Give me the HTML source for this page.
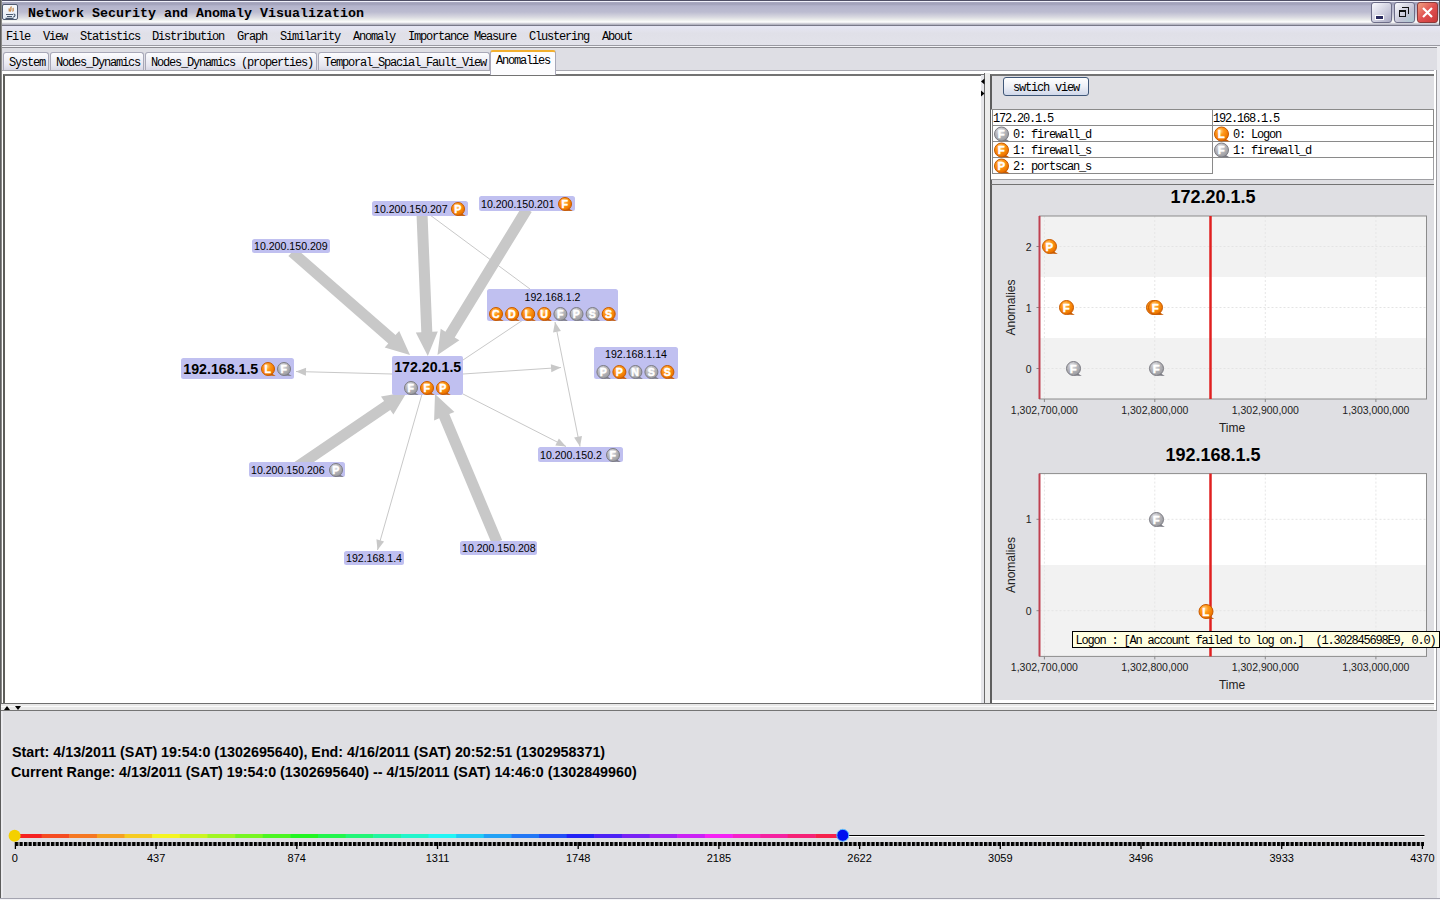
<!DOCTYPE html><html><head><meta charset="utf-8"><style>
*{margin:0;padding:0;box-sizing:border-box}
html,body{width:1440px;height:900px;overflow:hidden;background:#dfdfe3;font-family:"Liberation Sans",sans-serif}
.a{position:absolute}
#title{left:0;top:0;width:1440px;height:26px;background:linear-gradient(#f0f0fa 0px,#f0f0fa 0.8px,#a8a8c0 1.5px,#a0a0b8 3px,#b4b4cc 5px,#bcbcd0 11px,#d8d8e0 16px,#eceeec 19px,#fafafa 20.5px,#ffffff 21px,#d0d0d8 22.5px,#a8a8b8 24px);border-top:1px solid #505066;border-bottom:1px solid #787888}
#ttext{left:28px;top:5px;font:bold 13.33px "Liberation Mono",monospace;color:#000;white-space:pre}
#menu{left:0;top:26px;width:1440px;height:20px;background:linear-gradient(#e6e6f4,#e0e0e8 40%,#e2e2ea);border-bottom:1px solid #9a9aa2}
.mi{top:4px;font:12px "Liberation Mono",monospace;letter-spacing:-1.2px;color:#000;white-space:pre}
#tabstrip{left:0;top:46px;width:1440px;height:28px;background:#dedee4;border-top:1px solid #f4f4f8}
.tab{top:5px;height:19px;border:1px solid #a8a8b8;border-bottom:none;border-radius:3px 3px 0 0;background:linear-gradient(#fcfcfe,#e6e6f0 70%,#d4d4e2);font:12px "Liberation Mono",monospace;letter-spacing:-1.2px;padding-left:5px;line-height:21px;white-space:pre}
.tab.sel{z-index:5;top:3px;height:25px;background:#fcfcfe;border-top:2px solid #f2b030;line-height:18px}
.m12{font:12px "Liberation Mono",monospace;letter-spacing:-1.2px;white-space:pre;color:#000}
svg text{font-family:"Liberation Sans",sans-serif}
</style></head><body>
<div id="title" class="a">
 <div class="a" style="left:2px;top:3px;width:16px;height:16px;border:1px solid #505a70;border-radius:2px;background:linear-gradient(#f8f8fc,#e4ecf6)"></div>
 <svg class="a" style="left:3px;top:4px" width="14" height="14" viewBox="0 0 14 14"><path d="M8.5 1.5c-2 1.5 1 2.5-1.5 5M10.5 3c-1.5 1 1 2-1 3.5M6.5 3.5c-1 1 .5 1.5-.5 3" stroke="#c8884a" fill="none" stroke-width="1.3"/><path d="M3 9.5h7M4 11.5h5M2.5 13.3h8" stroke="#4a5a70" stroke-width="1.2"/><path d="M10.5 9c2 0 2 3-.5 3" stroke="#4a5a70" fill="none" stroke-width="1.2"/></svg>
 <div id="ttext" class="a">Network Security and Anomaly Visualization</div>
 <div class="a" style="left:1371px;top:1px;width:21px;height:21px;border:1px solid #6d6d88;border-radius:3px;background:linear-gradient(135deg,#fafafe,#c4c4d6 70%,#a6a6c0)"></div>
 <div class="a" style="left:1376px;top:15px;width:7px;height:3px;background:#2c2c60;box-shadow:0 0 0 1px #fff"></div>
 <div class="a" style="left:1394px;top:1px;width:21px;height:21px;border:1px solid #6d6d88;border-radius:3px;background:linear-gradient(135deg,#fafafe,#c4c4d6 60%,#a8c8d0)"></div>
 <div class="a" style="left:1402px;top:6px;width:7px;height:7px;border:1.5px solid #111;border-left:none;border-bottom:none"></div>
 <div class="a" style="left:1399px;top:9px;width:7px;height:7px;border:1.5px solid #111;border-top-width:2px"></div>
 <div class="a" style="left:1417px;top:1px;width:21px;height:21px;border:1px solid #8a3a3a;border-radius:3px;background:linear-gradient(135deg,#f0a080,#e05050 50%,#c83838)"></div>
 <svg class="a" style="left:1420px;top:4px" width="15" height="15"><path d="M3 3L12 12M12 3L3 12" stroke="#fff" stroke-width="2.2"/></svg>
</div>
<div id="menu" class="a">
<div class="a mi" style="left:6px">File</div>
<div class="a mi" style="left:43px">View</div>
<div class="a mi" style="left:80px">Statistics</div>
<div class="a mi" style="left:152px">Distribution</div>
<div class="a mi" style="left:237px">Graph</div>
<div class="a mi" style="left:280px">Similarity</div>
<div class="a mi" style="left:353px">Anomaly</div>
<div class="a mi" style="left:408px">Importance Measure</div>
<div class="a mi" style="left:529px">Clustering</div>
<div class="a mi" style="left:602px">About</div>
</div>
<div id="tabstrip" class="a"><div class="a" style="left:0;top:0px;width:1440px;height:1px;background:#8a8a90"></div>
<div class="a tab" style="left:3px;width:46px">System</div>
<div class="a tab" style="left:50px;width:94px">Nodes_Dynamics</div>
<div class="a tab" style="left:145px;width:172px">Nodes_Dynamics (properties)</div>
<div class="a tab" style="left:318px;width:172px">Temporal_Spacial_Fault_View</div>
<div class="a tab sel" style="left:490px;width:66px">Anomalies</div>
</div>
<div class="a" style="left:2px;top:70px;width:1435px;height:1px;background:#a8a8b0"></div>
<div class="a" style="left:2px;top:71px;width:1434px;height:3px;background:#fff"></div>
<div class="a" style="left:3px;top:74px;width:982px;height:630px;background:#fff;border-top:2px solid #737373;border-left:2px solid #5e5e5a;border-bottom:1px solid #737373"></div>
<div class="a" style="left:981px;top:75px;width:4px;height:628px;background:#e6e6ea"></div>
<div class="a" style="left:984px;top:73px;width:1px;height:631px;background:#6a6a6a"></div>
<div class="a" style="left:985px;top:73px;width:5px;height:631px;background:#ececec"></div>
<svg class="a" style="left:980px;top:78px" width="6" height="20"><path d="M4.5 0.5L1 3.5L4.5 6.5Z" fill="#000"/><path d="M1 12.5L4.5 15.5L1 18.5Z" fill="#000"/></svg>
<svg class="a" style="left:0;top:0" width="1440" height="900"><defs>
<radialGradient id="go" cx="40%" cy="30%" r="75%"><stop offset="0" stop-color="#ffd090"/><stop offset="0.35" stop-color="#ff9a1a"/><stop offset="0.8" stop-color="#f07800"/><stop offset="1" stop-color="#d06000"/></radialGradient>
<radialGradient id="gg" cx="40%" cy="30%" r="75%"><stop offset="0" stop-color="#e8e8ec"/><stop offset="0.4" stop-color="#bcbcc0"/><stop offset="0.85" stop-color="#a0a0a4"/><stop offset="1" stop-color="#88888c"/></radialGradient>
</defs><line x1="392" y1="374" x2="296" y2="371.5" stroke="#c8c8c8" stroke-width="1"/><path d="M296.0 371.5 L306.1 367.8 L305.9 375.8Z" fill="#c8c8c8"/><line x1="463" y1="374" x2="561" y2="367.5" stroke="#c8c8c8" stroke-width="1"/><path d="M561.0 367.5 L551.3 372.2 L550.8 364.2Z" fill="#c8c8c8"/><line x1="422" y1="394" x2="377.5" y2="550" stroke="#c8c8c8" stroke-width="1"/><path d="M377.5 550.0 L376.4 539.3 L384.1 541.5Z" fill="#c8c8c8"/><line x1="463" y1="394" x2="566" y2="446.5" stroke="#c8c8c8" stroke-width="1"/><path d="M566.0 446.5 L555.3 445.5 L558.9 438.4Z" fill="#c8c8c8"/><line x1="555" y1="322" x2="580" y2="446.5" stroke="#c8c8c8" stroke-width="1"/><path d="M580.0 446.5 L574.1 437.5 L582.0 435.9Z" fill="#c8c8c8"/><path d="M555.0 322.0 L560.9 331.0 L553.0 332.6Z" fill="#c8c8c8"/><line x1="430" y1="215" x2="530" y2="289" stroke="#c8c8c8" stroke-width="1"/><line x1="463" y1="360" x2="523" y2="320" stroke="#c8c8c8" stroke-width="1"/><path d="M288.4 256.1 L388.3 343.4 L384.7 347.5 L410.0 355.0 L399.2 330.9 L395.5 335.1 L295.6 247.9Z" fill="#c8c8c8"/><path d="M416.5 214.2 L421.3 332.2 L415.8 332.5 L427.8 356.0 L437.8 331.6 L432.3 331.8 L427.5 213.8Z" fill="#c8c8c8"/><path d="M522.3 206.1 L445.4 331.7 L440.7 328.8 L437.5 355.0 L459.4 340.3 L454.7 337.4 L531.7 211.9Z" fill="#c8c8c8"/><path d="M294.1 475.5 L390.3 410.1 L393.4 414.6 L407.0 392.0 L381.0 396.4 L384.1 401.0 L287.9 466.5Z" fill="#c8c8c8"/><path d="M502.1 539.9 L449.3 414.0 L454.4 411.9 L435.0 394.0 L434.1 420.4 L439.2 418.3 L491.9 544.1Z" fill="#c8c8c8"/><rect x="252" y="239" width="78" height="14" rx="2.5" fill="#c0c0f0"/><text x="254" y="250" font-size="10.6"  text-anchor="start" fill="#000">10.200.150.209</text><rect x="372" y="201" width="96" height="15" rx="2.5" fill="#c0c0f0"/><text x="374" y="213" font-size="10.6"  text-anchor="start" fill="#000">10.200.150.207</text><path d="M461.5 213.2 L465.7 216.0 L458.7 215.7Z" fill="#c85a00"/><circle cx="458.0" cy="209.0" r="6.5" fill="url(#go)" stroke="#c85a00" stroke-width="1"/><text x="457.8" y="212.9" text-anchor="middle" font-weight="bold" font-size="10.6" fill="#fff" stroke="#fff" stroke-width="0.45">P</text><rect x="479" y="196" width="96" height="15" rx="2.5" fill="#c0c0f0"/><text x="481" y="208" font-size="10.6"  text-anchor="start" fill="#000">10.200.150.201</text><path d="M568.5 208.2 L572.7 211.0 L565.7 210.7Z" fill="#c85a00"/><circle cx="565.0" cy="204.0" r="6.5" fill="url(#go)" stroke="#c85a00" stroke-width="1"/><text x="564.8" y="207.9" text-anchor="middle" font-weight="bold" font-size="10.6" fill="#fff" stroke="#fff" stroke-width="0.45">F</text><rect x="249" y="462" width="96" height="15" rx="2.5" fill="#c0c0f0"/><text x="251" y="474" font-size="10.6"  text-anchor="start" fill="#000">10.200.150.206</text><path d="M339.5 474.2 L343.7 477.0 L336.7 476.6Z" fill="#7c7c84"/><circle cx="336.0" cy="470.0" r="6.5" fill="url(#gg)" stroke="#7c7c84" stroke-width="1"/><text x="335.8" y="473.9" text-anchor="middle" font-weight="bold" font-size="10.6" fill="#fff" stroke="#fff" stroke-width="0.45">P</text><rect x="344" y="551" width="60" height="14" rx="2.5" fill="#c0c0f0"/><text x="346" y="562" font-size="10.6"  text-anchor="start" fill="#000">192.168.1.4</text><rect x="460" y="541" width="77" height="14" rx="2.5" fill="#c0c0f0"/><text x="462" y="552" font-size="10.6"  text-anchor="start" fill="#000">10.200.150.208</text><rect x="538" y="447" width="85" height="15" rx="2.5" fill="#c0c0f0"/><text x="540" y="459" font-size="10.6"  text-anchor="start" fill="#000">10.200.150.2</text><path d="M616.5 459.2 L620.7 462.0 L613.7 461.6Z" fill="#7c7c84"/><circle cx="613.0" cy="455.0" r="6.5" fill="url(#gg)" stroke="#7c7c84" stroke-width="1"/><text x="612.8" y="458.9" text-anchor="middle" font-weight="bold" font-size="10.6" fill="#fff" stroke="#fff" stroke-width="0.45">F</text><rect x="181" y="358" width="113" height="21" rx="2.5" fill="#c0c0f0"/><text x="183.3" y="374" font-size="14.2" font-weight="bold" text-anchor="start" fill="#000">192.168.1.5</text><path d="M271.5 373.2 L275.7 376.0 L268.7 375.6Z" fill="#c85a00"/><circle cx="268.0" cy="369.0" r="6.5" fill="url(#go)" stroke="#c85a00" stroke-width="1"/><text x="267.8" y="372.9" text-anchor="middle" font-weight="bold" font-size="10.6" fill="#fff" stroke="#fff" stroke-width="0.45">L</text><path d="M287.5 373.2 L291.7 376.0 L284.7 375.6Z" fill="#7c7c84"/><circle cx="284.0" cy="369.0" r="6.5" fill="url(#gg)" stroke="#7c7c84" stroke-width="1"/><text x="283.8" y="372.9" text-anchor="middle" font-weight="bold" font-size="10.6" fill="#fff" stroke="#fff" stroke-width="0.45">F</text><rect x="392" y="356" width="71" height="39" rx="2" fill="#c0c0f0"/><text x="394.2" y="371.8" font-size="14.2" font-weight="bold" text-anchor="start" fill="#000">172.20.1.5</text><path d="M414.5 392.2 L418.7 395.0 L411.7 394.6Z" fill="#7c7c84"/><circle cx="411.0" cy="388.0" r="6.5" fill="url(#gg)" stroke="#7c7c84" stroke-width="1"/><text x="410.8" y="391.9" text-anchor="middle" font-weight="bold" font-size="10.6" fill="#fff" stroke="#fff" stroke-width="0.45">F</text><path d="M430.5 392.2 L434.7 395.0 L427.7 394.6Z" fill="#c85a00"/><circle cx="427.0" cy="388.0" r="6.5" fill="url(#go)" stroke="#c85a00" stroke-width="1"/><text x="426.8" y="391.9" text-anchor="middle" font-weight="bold" font-size="10.6" fill="#fff" stroke="#fff" stroke-width="0.45">F</text><path d="M446.5 392.2 L450.7 395.0 L443.7 394.6Z" fill="#c85a00"/><circle cx="443.0" cy="388.0" r="6.5" fill="url(#go)" stroke="#c85a00" stroke-width="1"/><text x="442.8" y="391.9" text-anchor="middle" font-weight="bold" font-size="10.6" fill="#fff" stroke="#fff" stroke-width="0.45">P</text><rect x="487" y="289" width="131" height="32" rx="2.5" fill="#c0c0f0"/><text x="552.5" y="301" font-size="10.6"  text-anchor="middle" fill="#000">192.168.1.2</text><path d="M499.5 318.2 L503.7 321.0 L496.7 320.6Z" fill="#c85a00"/><circle cx="496.0" cy="314.0" r="6.5" fill="url(#go)" stroke="#c85a00" stroke-width="1"/><text x="495.8" y="317.9" text-anchor="middle" font-weight="bold" font-size="10.6" fill="#fff" stroke="#fff" stroke-width="0.45">C</text><path d="M515.6 318.2 L519.8 321.0 L512.8 320.6Z" fill="#c85a00"/><circle cx="512.1" cy="314.0" r="6.5" fill="url(#go)" stroke="#c85a00" stroke-width="1"/><text x="511.9" y="317.9" text-anchor="middle" font-weight="bold" font-size="10.6" fill="#fff" stroke="#fff" stroke-width="0.45">D</text><path d="M531.7 318.2 L535.9 321.0 L528.9 320.6Z" fill="#c85a00"/><circle cx="528.2" cy="314.0" r="6.5" fill="url(#go)" stroke="#c85a00" stroke-width="1"/><text x="528.0" y="317.9" text-anchor="middle" font-weight="bold" font-size="10.6" fill="#fff" stroke="#fff" stroke-width="0.45">L</text><path d="M547.8 318.2 L552.0 321.0 L545.0 320.6Z" fill="#c85a00"/><circle cx="544.3" cy="314.0" r="6.5" fill="url(#go)" stroke="#c85a00" stroke-width="1"/><text x="544.1" y="317.9" text-anchor="middle" font-weight="bold" font-size="10.6" fill="#fff" stroke="#fff" stroke-width="0.45">U</text><path d="M563.9 318.2 L568.1 321.0 L561.1 320.6Z" fill="#7c7c84"/><circle cx="560.4" cy="314.0" r="6.5" fill="url(#gg)" stroke="#7c7c84" stroke-width="1"/><text x="560.2" y="317.9" text-anchor="middle" font-weight="bold" font-size="10.6" fill="#fff" stroke="#fff" stroke-width="0.45">F</text><path d="M580.0 318.2 L584.2 321.0 L577.2 320.6Z" fill="#7c7c84"/><circle cx="576.5" cy="314.0" r="6.5" fill="url(#gg)" stroke="#7c7c84" stroke-width="1"/><text x="576.3" y="317.9" text-anchor="middle" font-weight="bold" font-size="10.6" fill="#fff" stroke="#fff" stroke-width="0.45">P</text><path d="M596.1 318.2 L600.3 321.0 L593.3 320.6Z" fill="#7c7c84"/><circle cx="592.6" cy="314.0" r="6.5" fill="url(#gg)" stroke="#7c7c84" stroke-width="1"/><text x="592.4" y="317.9" text-anchor="middle" font-weight="bold" font-size="10.6" fill="#fff" stroke="#fff" stroke-width="0.45">S</text><path d="M612.2 318.2 L616.4 321.0 L609.4 320.6Z" fill="#c85a00"/><circle cx="608.7" cy="314.0" r="6.5" fill="url(#go)" stroke="#c85a00" stroke-width="1"/><text x="608.5" y="317.9" text-anchor="middle" font-weight="bold" font-size="10.6" fill="#fff" stroke="#fff" stroke-width="0.45">S</text><rect x="594" y="347" width="84" height="32" rx="2.5" fill="#c0c0f0"/><text x="636" y="358" font-size="10.6"  text-anchor="middle" fill="#000">192.168.1.14</text><path d="M606.9 376.2 L611.1 379.0 L604.1 378.6Z" fill="#7c7c84"/><circle cx="603.4" cy="372.0" r="6.5" fill="url(#gg)" stroke="#7c7c84" stroke-width="1"/><text x="603.2" y="375.9" text-anchor="middle" font-weight="bold" font-size="10.6" fill="#fff" stroke="#fff" stroke-width="0.45">P</text><path d="M622.9 376.2 L627.1 379.0 L620.1 378.6Z" fill="#c85a00"/><circle cx="619.4" cy="372.0" r="6.5" fill="url(#go)" stroke="#c85a00" stroke-width="1"/><text x="619.2" y="375.9" text-anchor="middle" font-weight="bold" font-size="10.6" fill="#fff" stroke="#fff" stroke-width="0.45">P</text><path d="M638.9 376.2 L643.1 379.0 L636.1 378.6Z" fill="#7c7c84"/><circle cx="635.4" cy="372.0" r="6.5" fill="url(#gg)" stroke="#7c7c84" stroke-width="1"/><text x="635.2" y="375.9" text-anchor="middle" font-weight="bold" font-size="10.6" fill="#fff" stroke="#fff" stroke-width="0.45">N</text><path d="M654.9 376.2 L659.1 379.0 L652.1 378.6Z" fill="#7c7c84"/><circle cx="651.4" cy="372.0" r="6.5" fill="url(#gg)" stroke="#7c7c84" stroke-width="1"/><text x="651.2" y="375.9" text-anchor="middle" font-weight="bold" font-size="10.6" fill="#fff" stroke="#fff" stroke-width="0.45">S</text><path d="M670.9 376.2 L675.1 379.0 L668.1 378.6Z" fill="#c85a00"/><circle cx="667.4" cy="372.0" r="6.5" fill="url(#go)" stroke="#c85a00" stroke-width="1"/><text x="667.2" y="375.9" text-anchor="middle" font-weight="bold" font-size="10.6" fill="#fff" stroke="#fff" stroke-width="0.45">S</text></svg>
<div class="a" style="left:990px;top:74px;width:447px;height:630px;background:#dfdfe3;border-left:2px solid #5e5e5e;border-top:2px solid #737373"></div>
<div class="a" style="left:1003px;top:77px;width:86px;height:19px;border:1px solid #3f5778;border-radius:3px;background:linear-gradient(#ffffff,#eef0f6 50%,#d0d8ea)"></div>
<div class="a m12" style="left:1013px;top:81px">swtich view</div>
<div class="a" style="left:991px;top:109px;width:443px;height:71px;background:#fff;border:1px solid #a0a0a4;border-left:none"></div>
<div class="a" style="left:992px;top:109px;width:221px;height:17px;border:1px solid #8a8a8a"></div>
<div class="a" style="left:992px;top:125px;width:221px;height:17px;border:1px solid #8a8a8a"></div>
<div class="a" style="left:992px;top:141px;width:221px;height:17px;border:1px solid #8a8a8a"></div>
<div class="a" style="left:992px;top:157px;width:221px;height:17px;border:1px solid #8a8a8a"></div>
<div class="a" style="left:1212px;top:109px;width:222px;height:17px;border:1px solid #8a8a8a"></div>
<div class="a" style="left:1212px;top:125px;width:222px;height:17px;border:1px solid #8a8a8a"></div>
<div class="a" style="left:1212px;top:141px;width:222px;height:17px;border:1px solid #8a8a8a"></div>
<div class="a m12" style="left:993px;top:112px">172.20.1.5</div>
<div class="a m12" style="left:1213px;top:112px">192.168.1.5</div>
<div class="a m12" style="left:1013px;top:128px">0: firewall_d</div>
<div class="a m12" style="left:1013px;top:144px">1: firewall_s</div>
<div class="a m12" style="left:1013px;top:160px">2: portscan_s</div>
<div class="a m12" style="left:1233px;top:128px">0: Logon</div>
<div class="a m12" style="left:1233px;top:144px">1: firewall_d</div>
<div class="a" style="left:991px;top:184px;width:444px;height:1px;background:#737373"></div>
<svg class="a" style="left:0;top:0" width="1440" height="900"><defs>
<radialGradient id="go2" cx="40%" cy="30%" r="75%"><stop offset="0" stop-color="#ffd090"/><stop offset="0.35" stop-color="#ff9a1a"/><stop offset="0.8" stop-color="#f07800"/><stop offset="1" stop-color="#d06000"/></radialGradient>
<radialGradient id="gg2" cx="40%" cy="30%" r="75%"><stop offset="0" stop-color="#e8e8ec"/><stop offset="0.4" stop-color="#bcbcc0"/><stop offset="0.85" stop-color="#a0a0a4"/><stop offset="1" stop-color="#88888c"/></radialGradient>
</defs><path d="M1005.2 138.5 L1009.8 141.5 L1002.2 141.1Z" fill="#7c7c84"/><circle cx="1001.5" cy="134.0" r="7.0" fill="url(#gg2)" stroke="#7c7c84" stroke-width="1"/><text x="1001.3" y="138.2" text-anchor="middle" font-weight="bold" font-size="11.4" fill="#fff" stroke="#fff" stroke-width="0.45">F</text><path d="M1005.2 154.5 L1009.8 157.5 L1002.2 157.1Z" fill="#c85a00"/><circle cx="1001.5" cy="150.0" r="7.0" fill="url(#go2)" stroke="#c85a00" stroke-width="1"/><text x="1001.3" y="154.2" text-anchor="middle" font-weight="bold" font-size="11.4" fill="#fff" stroke="#fff" stroke-width="0.45">F</text><path d="M1005.2 170.5 L1009.8 173.5 L1002.2 173.1Z" fill="#c85a00"/><circle cx="1001.5" cy="166.0" r="7.0" fill="url(#go2)" stroke="#c85a00" stroke-width="1"/><text x="1001.3" y="170.2" text-anchor="middle" font-weight="bold" font-size="11.4" fill="#fff" stroke="#fff" stroke-width="0.45">P</text><path d="M1225.2 138.5 L1229.8 141.5 L1222.2 141.1Z" fill="#c85a00"/><circle cx="1221.5" cy="134.0" r="7.0" fill="url(#go2)" stroke="#c85a00" stroke-width="1"/><text x="1221.3" y="138.2" text-anchor="middle" font-weight="bold" font-size="11.4" fill="#fff" stroke="#fff" stroke-width="0.45">L</text><path d="M1225.2 154.5 L1229.8 157.5 L1222.2 157.1Z" fill="#7c7c84"/><circle cx="1221.5" cy="150.0" r="7.0" fill="url(#gg2)" stroke="#7c7c84" stroke-width="1"/><text x="1221.3" y="154.2" text-anchor="middle" font-weight="bold" font-size="11.4" fill="#fff" stroke="#fff" stroke-width="0.45">F</text><text x="1213" y="203" font-size="18" font-weight="bold" text-anchor="middle">172.20.1.5</text><rect x="1039.5" y="216.0" width="387.0" height="183.0" fill="#fff"/><rect x="1039.5" y="338.0" width="387.0" height="61.0" fill="#f2f2f2"/><rect x="1039.5" y="216.0" width="387.0" height="61.0" fill="#f2f2f2"/><line x1="1044.4" y1="216.0" x2="1044.4" y2="399.0" stroke="#e6e6e6" stroke-width="1" stroke-dasharray="2 2"/><line x1="1044.4" y1="399.0" x2="1044.4" y2="402.0" stroke="#888" stroke-width="1"/><line x1="1154.8" y1="216.0" x2="1154.8" y2="399.0" stroke="#e6e6e6" stroke-width="1" stroke-dasharray="2 2"/><line x1="1154.8" y1="399.0" x2="1154.8" y2="402.0" stroke="#888" stroke-width="1"/><line x1="1265.3" y1="216.0" x2="1265.3" y2="399.0" stroke="#e6e6e6" stroke-width="1" stroke-dasharray="2 2"/><line x1="1265.3" y1="399.0" x2="1265.3" y2="402.0" stroke="#888" stroke-width="1"/><line x1="1375.9" y1="216.0" x2="1375.9" y2="399.0" stroke="#e6e6e6" stroke-width="1" stroke-dasharray="2 2"/><line x1="1375.9" y1="399.0" x2="1375.9" y2="402.0" stroke="#888" stroke-width="1"/><text x="1044.4" y="414.0" font-size="10.5" text-anchor="middle" fill="#222">1,302,700,000</text><text x="1154.8" y="414.0" font-size="10.5" text-anchor="middle" fill="#222">1,302,800,000</text><text x="1265.3" y="414.0" font-size="10.5" text-anchor="middle" fill="#222">1,302,900,000</text><text x="1375.9" y="414.0" font-size="10.5" text-anchor="middle" fill="#222">1,303,000,000</text><line x1="1039.5" y1="368.5" x2="1426.5" y2="368.5" stroke="#e4e4e4" stroke-width="1" stroke-dasharray="2 2"/><line x1="1036.5" y1="368.5" x2="1039.5" y2="368.5" stroke="#888"/><text x="1031.5" y="372.5" font-size="10.5" text-anchor="end" fill="#222">0</text><line x1="1039.5" y1="307.5" x2="1426.5" y2="307.5" stroke="#e4e4e4" stroke-width="1" stroke-dasharray="2 2"/><line x1="1036.5" y1="307.5" x2="1039.5" y2="307.5" stroke="#888"/><text x="1031.5" y="311.5" font-size="10.5" text-anchor="end" fill="#222">1</text><line x1="1039.5" y1="246.5" x2="1426.5" y2="246.5" stroke="#e4e4e4" stroke-width="1" stroke-dasharray="2 2"/><line x1="1036.5" y1="246.5" x2="1039.5" y2="246.5" stroke="#888"/><text x="1031.5" y="250.5" font-size="10.5" text-anchor="end" fill="#222">2</text><rect x="1039.5" y="216.0" width="387.0" height="183.0" fill="none" stroke="#8c8c8c" stroke-width="1"/><line x1="1039.5" y1="216.0" x2="1039.5" y2="399.0" stroke="#c04050" stroke-width="2"/><line x1="1210.5" y1="216.0" x2="1210.5" y2="399.0" stroke="#e02020" stroke-width="2.5"/><text transform="translate(1015 307.5) rotate(-90)" font-size="12" text-anchor="middle" fill="#222">Anomalies</text><text x="1232" y="432.0" font-size="12" text-anchor="middle" fill="#222">Time</text><path d="M1053.2 251.0 L1057.8 254.0 L1050.2 253.6Z" fill="#c85a00"/><circle cx="1049.5" cy="246.5" r="7.0" fill="url(#go2)" stroke="#c85a00" stroke-width="1"/><text x="1049.3" y="250.7" text-anchor="middle" font-weight="bold" font-size="11.4" fill="#fff" stroke="#fff" stroke-width="0.45">P</text><path d="M1070.2 312.0 L1074.8 315.0 L1067.2 314.6Z" fill="#c85a00"/><circle cx="1066.5" cy="307.5" r="7.0" fill="url(#go2)" stroke="#c85a00" stroke-width="1"/><text x="1066.3" y="311.7" text-anchor="middle" font-weight="bold" font-size="11.4" fill="#fff" stroke="#fff" stroke-width="0.45">F</text><path d="M1157.2 312.0 L1161.8 315.0 L1154.2 314.6Z" fill="#c85a00"/><circle cx="1153.5" cy="307.5" r="7.0" fill="url(#go2)" stroke="#c85a00" stroke-width="1"/><text x="1153.3" y="311.7" text-anchor="middle" font-weight="bold" font-size="11.4" fill="#fff" stroke="#fff" stroke-width="0.45">F</text><path d="M1159.2 312.0 L1163.8 315.0 L1156.2 314.6Z" fill="#c85a00"/><circle cx="1155.5" cy="307.5" r="7.0" fill="url(#go2)" stroke="#c85a00" stroke-width="1"/><text x="1155.3" y="311.7" text-anchor="middle" font-weight="bold" font-size="11.4" fill="#fff" stroke="#fff" stroke-width="0.45">F</text><path d="M1077.2 373.0 L1081.8 376.0 L1074.2 375.6Z" fill="#7c7c84"/><circle cx="1073.5" cy="368.5" r="7.0" fill="url(#gg2)" stroke="#7c7c84" stroke-width="1"/><text x="1073.3" y="372.7" text-anchor="middle" font-weight="bold" font-size="11.4" fill="#fff" stroke="#fff" stroke-width="0.45">F</text><path d="M1160.2 373.0 L1164.8 376.0 L1157.2 375.6Z" fill="#7c7c84"/><circle cx="1156.5" cy="368.5" r="7.0" fill="url(#gg2)" stroke="#7c7c84" stroke-width="1"/><text x="1156.3" y="372.7" text-anchor="middle" font-weight="bold" font-size="11.4" fill="#fff" stroke="#fff" stroke-width="0.45">F</text><text x="1213" y="461" font-size="18" font-weight="bold" text-anchor="middle">192.168.1.5</text><rect x="1039.5" y="473.6" width="387.0" height="182.8" fill="#fff"/><rect x="1039.5" y="565.0" width="387.0" height="91.4" fill="#f2f2f2"/><line x1="1044.4" y1="473.6" x2="1044.4" y2="656.4000000000001" stroke="#e6e6e6" stroke-width="1" stroke-dasharray="2 2"/><line x1="1044.4" y1="656.4000000000001" x2="1044.4" y2="659.4000000000001" stroke="#888" stroke-width="1"/><line x1="1154.8" y1="473.6" x2="1154.8" y2="656.4000000000001" stroke="#e6e6e6" stroke-width="1" stroke-dasharray="2 2"/><line x1="1154.8" y1="656.4000000000001" x2="1154.8" y2="659.4000000000001" stroke="#888" stroke-width="1"/><line x1="1265.3" y1="473.6" x2="1265.3" y2="656.4000000000001" stroke="#e6e6e6" stroke-width="1" stroke-dasharray="2 2"/><line x1="1265.3" y1="656.4000000000001" x2="1265.3" y2="659.4000000000001" stroke="#888" stroke-width="1"/><line x1="1375.9" y1="473.6" x2="1375.9" y2="656.4000000000001" stroke="#e6e6e6" stroke-width="1" stroke-dasharray="2 2"/><line x1="1375.9" y1="656.4000000000001" x2="1375.9" y2="659.4000000000001" stroke="#888" stroke-width="1"/><text x="1044.4" y="671.4000000000001" font-size="10.5" text-anchor="middle" fill="#222">1,302,700,000</text><text x="1154.8" y="671.4000000000001" font-size="10.5" text-anchor="middle" fill="#222">1,302,800,000</text><text x="1265.3" y="671.4000000000001" font-size="10.5" text-anchor="middle" fill="#222">1,302,900,000</text><text x="1375.9" y="671.4000000000001" font-size="10.5" text-anchor="middle" fill="#222">1,303,000,000</text><line x1="1039.5" y1="610.7" x2="1426.5" y2="610.7" stroke="#e4e4e4" stroke-width="1" stroke-dasharray="2 2"/><line x1="1036.5" y1="610.7" x2="1039.5" y2="610.7" stroke="#888"/><text x="1031.5" y="614.7" font-size="10.5" text-anchor="end" fill="#222">0</text><line x1="1039.5" y1="519.3000000000001" x2="1426.5" y2="519.3000000000001" stroke="#e4e4e4" stroke-width="1" stroke-dasharray="2 2"/><line x1="1036.5" y1="519.3000000000001" x2="1039.5" y2="519.3000000000001" stroke="#888"/><text x="1031.5" y="523.3000000000001" font-size="10.5" text-anchor="end" fill="#222">1</text><rect x="1039.5" y="473.6" width="387.0" height="182.8" fill="none" stroke="#8c8c8c" stroke-width="1"/><line x1="1039.5" y1="473.6" x2="1039.5" y2="656.4000000000001" stroke="#c04050" stroke-width="2"/><line x1="1210.5" y1="473.6" x2="1210.5" y2="656.4000000000001" stroke="#e02020" stroke-width="2.5"/><text transform="translate(1015 565.0) rotate(-90)" font-size="12" text-anchor="middle" fill="#222">Anomalies</text><text x="1232" y="689.4000000000001" font-size="12" text-anchor="middle" fill="#222">Time</text><path d="M1160.2 524.0 L1164.8 527.0 L1157.2 526.6Z" fill="#7c7c84"/><circle cx="1156.5" cy="519.5" r="7.0" fill="url(#gg2)" stroke="#7c7c84" stroke-width="1"/><text x="1156.3" y="523.7" text-anchor="middle" font-weight="bold" font-size="11.4" fill="#fff" stroke="#fff" stroke-width="0.45">F</text><path d="M1209.8 616.0 L1214.2 619.0 L1206.8 618.6Z" fill="#c85a00"/><circle cx="1206.0" cy="611.5" r="7.0" fill="url(#go2)" stroke="#c85a00" stroke-width="1"/><text x="1205.8" y="615.7" text-anchor="middle" font-weight="bold" font-size="11.4" fill="#fff" stroke="#fff" stroke-width="0.45">L</text></svg>
<div class="a" style="left:992px;top:700px;width:442px;height:3px;background:#fff"></div>
<div class="a" style="left:1434px;top:73px;width:1px;height:631px;background:#c8c8cc"></div>
<div class="a" style="left:0;top:703px;width:1440px;height:8px;background:#e8e8e8;border-top:1px solid #6e6e6e;border-bottom:1px solid #747474"></div>
<div class="a" style="left:0;top:706px;width:1440px;height:1px;background:#fafafa"></div>
<svg class="a" style="left:3px;top:705px" width="20" height="6"><path d="M1 5L4 1L7 5Z M12 1L18 1L15 5Z" fill="#000"/></svg>
<div class="a" style="left:12px;top:744px;font:bold 14.3px Liberation Sans,sans-serif;white-space:pre;color:#000">Start: 4/13/2011 (SAT) 19:54:0 (1302695640), End: 4/16/2011 (SAT) 20:52:51 (1302958371)</div>
<div class="a" style="left:11px;top:764px;font:bold 14.3px Liberation Sans,sans-serif;white-space:pre;color:#000">Current Range: 4/13/2011 (SAT) 19:54:0 (1302695640) -- 4/15/2011 (SAT) 14:46:0 (1302849960)</div>
<svg class="a" style="left:0;top:0" width="1440" height="900"><defs><pattern id="dash" x="15" y="0" width="4.507" height="10" patternUnits="userSpaceOnUse"><rect x="0" y="0" width="3.3" height="10" fill="#000"/></pattern></defs><rect x="14.0" y="834" width="28.1" height="4" fill="#f52222"/><rect x="41.6" y="834" width="28.1" height="4" fill="#f54c22"/><rect x="69.3" y="834" width="28.1" height="4" fill="#f57722"/><rect x="96.9" y="834" width="28.1" height="4" fill="#f5a122"/><rect x="124.5" y="834" width="28.1" height="4" fill="#f5cb22"/><rect x="152.2" y="834" width="28.1" height="4" fill="#f5f522"/><rect x="179.8" y="834" width="28.1" height="4" fill="#cbf522"/><rect x="207.4" y="834" width="28.1" height="4" fill="#a1f522"/><rect x="235.1" y="834" width="28.1" height="4" fill="#77f522"/><rect x="262.7" y="834" width="28.1" height="4" fill="#4cf522"/><rect x="290.3" y="834" width="28.1" height="4" fill="#22f522"/><rect x="318.0" y="834" width="28.1" height="4" fill="#22f54c"/><rect x="345.6" y="834" width="28.1" height="4" fill="#22f577"/><rect x="373.2" y="834" width="28.1" height="4" fill="#22f5a1"/><rect x="400.9" y="834" width="28.1" height="4" fill="#22f5cb"/><rect x="428.5" y="834" width="28.1" height="4" fill="#22f5f5"/><rect x="456.1" y="834" width="28.1" height="4" fill="#22cbf5"/><rect x="483.8" y="834" width="28.1" height="4" fill="#22a1f5"/><rect x="511.4" y="834" width="28.1" height="4" fill="#2277f5"/><rect x="539.0" y="834" width="28.1" height="4" fill="#224cf5"/><rect x="566.7" y="834" width="28.1" height="4" fill="#2222f5"/><rect x="594.3" y="834" width="28.1" height="4" fill="#4c22f5"/><rect x="621.9" y="834" width="28.1" height="4" fill="#7722f5"/><rect x="649.6" y="834" width="28.1" height="4" fill="#a122f5"/><rect x="677.2" y="834" width="28.1" height="4" fill="#cb22f5"/><rect x="704.8" y="834" width="28.1" height="4" fill="#f522f5"/><rect x="732.5" y="834" width="28.1" height="4" fill="#f522cb"/><rect x="760.1" y="834" width="28.1" height="4" fill="#f522a1"/><rect x="787.7" y="834" width="28.1" height="4" fill="#f52277"/><rect x="815.4" y="834" width="28.1" height="4" fill="#f5224c"/><line x1="849" y1="835.5" x2="1424.5" y2="835.5" stroke="#000" stroke-width="1"/><line x1="849" y1="836.5" x2="1424.5" y2="836.5" stroke="#fff" stroke-width="1"/><rect x="15" y="842" width="1409" height="4" fill="url(#dash)"/><line x1="15.4" y1="842" x2="15.4" y2="849" stroke="#000" stroke-width="1.3"/><text x="14.9" y="862" font-size="11" text-anchor="middle" font-family="Liberation Sans" fill="#000">0</text><line x1="156.1" y1="842" x2="156.1" y2="849" stroke="#000" stroke-width="1.3"/><text x="156.1" y="862" font-size="11" text-anchor="middle" font-family="Liberation Sans" fill="#000">437</text><line x1="296.8" y1="842" x2="296.8" y2="849" stroke="#000" stroke-width="1.3"/><text x="296.8" y="862" font-size="11" text-anchor="middle" font-family="Liberation Sans" fill="#000">874</text><line x1="437.5" y1="842" x2="437.5" y2="849" stroke="#000" stroke-width="1.3"/><text x="437.5" y="862" font-size="11" text-anchor="middle" font-family="Liberation Sans" fill="#000">1311</text><line x1="578.2" y1="842" x2="578.2" y2="849" stroke="#000" stroke-width="1.3"/><text x="578.2" y="862" font-size="11" text-anchor="middle" font-family="Liberation Sans" fill="#000">1748</text><line x1="718.9" y1="842" x2="718.9" y2="849" stroke="#000" stroke-width="1.3"/><text x="718.9" y="862" font-size="11" text-anchor="middle" font-family="Liberation Sans" fill="#000">2185</text><line x1="859.6" y1="842" x2="859.6" y2="849" stroke="#000" stroke-width="1.3"/><text x="859.6" y="862" font-size="11" text-anchor="middle" font-family="Liberation Sans" fill="#000">2622</text><line x1="1000.3" y1="842" x2="1000.3" y2="849" stroke="#000" stroke-width="1.3"/><text x="1000.3" y="862" font-size="11" text-anchor="middle" font-family="Liberation Sans" fill="#000">3059</text><line x1="1141.0" y1="842" x2="1141.0" y2="849" stroke="#000" stroke-width="1.3"/><text x="1141.0" y="862" font-size="11" text-anchor="middle" font-family="Liberation Sans" fill="#000">3496</text><line x1="1281.7" y1="842" x2="1281.7" y2="849" stroke="#000" stroke-width="1.3"/><text x="1281.7" y="862" font-size="11" text-anchor="middle" font-family="Liberation Sans" fill="#000">3933</text><line x1="1422.4" y1="842" x2="1422.4" y2="849" stroke="#000" stroke-width="1.3"/><text x="1422.4" y="862" font-size="11" text-anchor="middle" font-family="Liberation Sans" fill="#000">4370</text><circle cx="14.6" cy="835.8" r="6" fill="#f4d000"/><circle cx="842.8" cy="835.3" r="6" fill="#0010f0" stroke="#60c0ff" stroke-width="1"/></svg>
<div class="a" style="left:0;top:0;width:1px;height:900px;background:#5c5c5c"></div>
<div class="a" style="left:1px;top:0;width:1px;height:703px;background:#8a8a88"></div>
<div class="a" style="left:1px;top:711px;width:2px;height:187px;background:#ebebef"></div>
<div class="a" style="left:2px;top:71px;width:1px;height:632px;background:#fff"></div>
<div class="a" style="left:1439px;top:0;width:1px;height:25px;background:#555"></div>
<div class="a" style="left:1434px;top:70px;width:2px;height:640px;background:#fff"></div>
<div class="a" style="left:1436px;top:70px;width:1px;height:640px;background:#9a9a9e"></div>
<div class="a" style="left:1437px;top:46px;width:3px;height:852px;background:#ececf0"></div>
<div class="a" style="left:0;top:898px;width:1440px;height:1px;background:#a4a4b0"></div>
<div class="a" style="left:0;top:899px;width:1440px;height:1px;background:#f4f4f8"></div>
<div class="a m12" style="left:1072px;top:631px;width:368px;height:17px;background:#ffffe1;border:1px solid #000;padding:2px 0 0 2.5px">Logon : [An account failed to log on.]  (1.302845698E9, 0.0)</div>
</body></html>
